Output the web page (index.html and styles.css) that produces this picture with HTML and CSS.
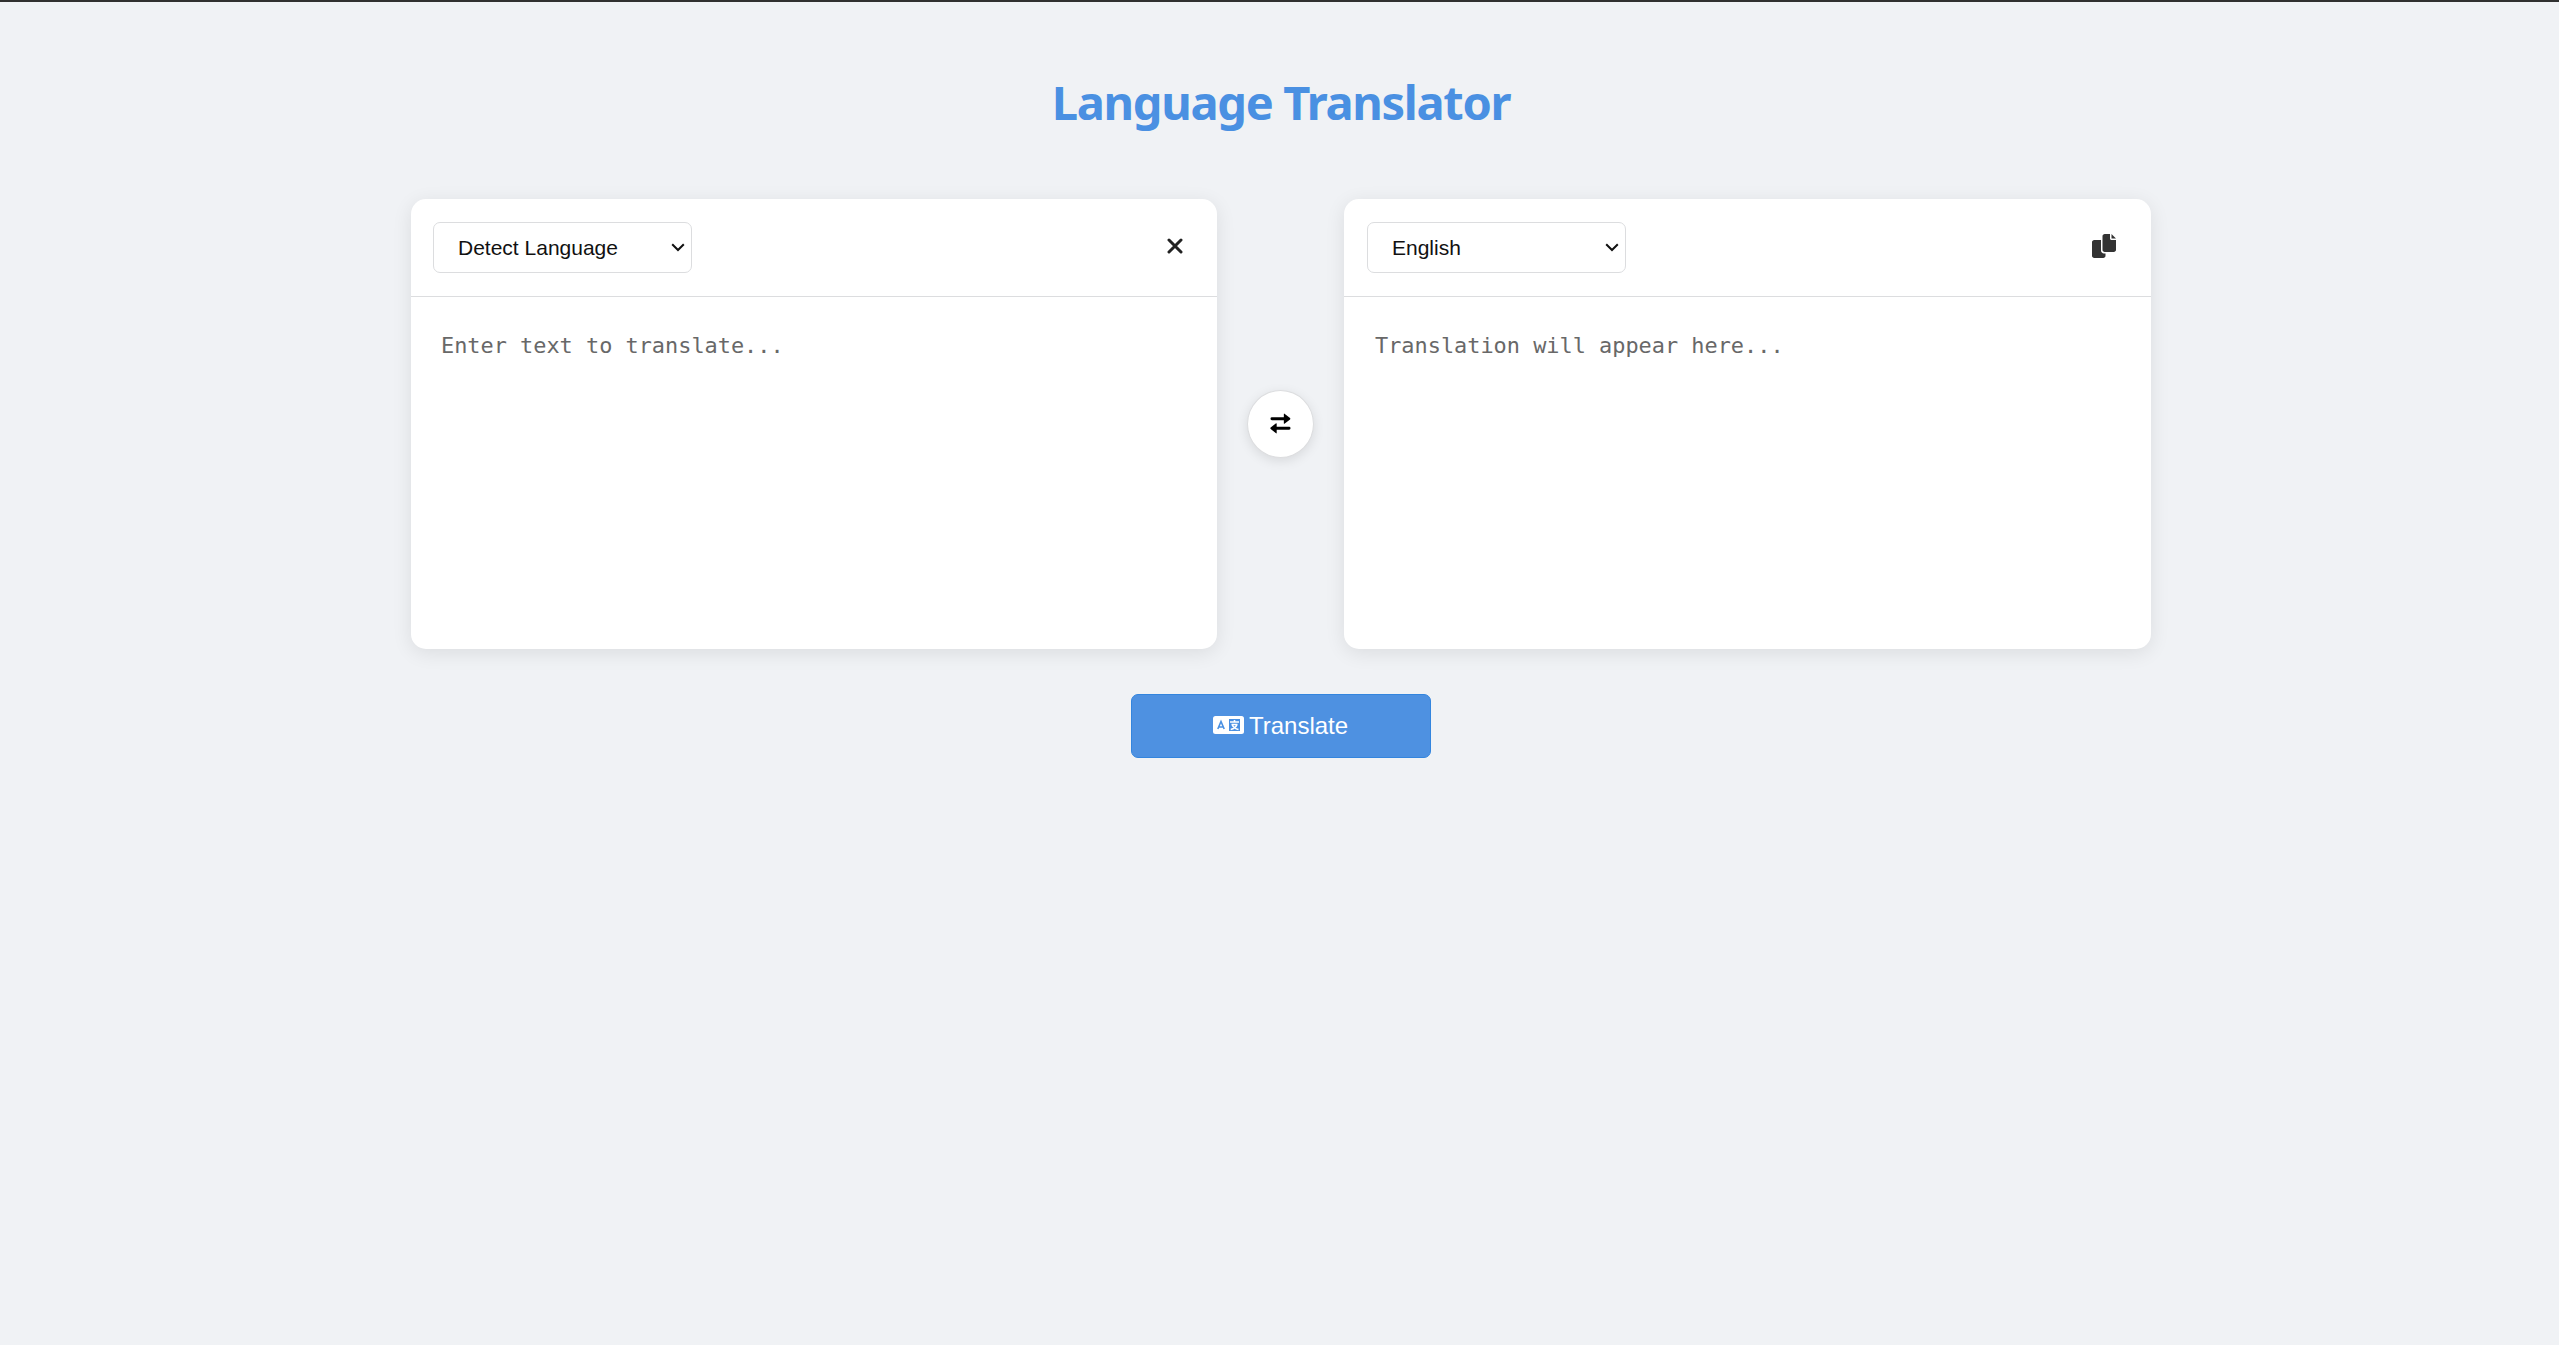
FILE: index.html
```html
<!DOCTYPE html>
<html lang="en">
<head>
<meta charset="utf-8">
<title>Language Translator</title>
<link rel="stylesheet" href="styles.css">
</head>
<body>
<main class="container">
  <h1 class="title">Language Translator</h1>
  <div class="panels">
    <section class="card source">
      <header class="card-header">
        <div class="select"><span>Detect Language</span>
          <svg class="chevron" viewBox="0 0 14 9"><path d="M1.2 1.2 7 7l5.800-5.800"/></svg>
        </div>
        <button class="icon-button close" aria-label="Clear"><svg viewBox="0 0 16 16"><path d="M2 2l12 12M14 2L2 14"/></svg></button>
      </header>
      <div class="text">Enter text to translate...</div>
    </section>
    <button class="swap" aria-label="Swap languages">
      <svg viewBox="0 0 22 22"><path class="shaft" d="M2 6h14M20 16H6"/><path d="M14.500 1.200q0-1 1-.2L21 5.300q.7.700 0 1.400L15.500 11q-1 .8-1-.2zM7 11.200q0-1-1-.2L.7 15.300q-.7.700 0 1.400L6 21q1 .8 1-.2z"/></svg>
    </button>
    <section class="card target">
      <header class="card-header">
        <div class="select"><span>English</span>
          <svg class="chevron" viewBox="0 0 14 9"><path d="M1.2 1.2 7 7l5.800-5.800"/></svg>
        </div>
        <button class="icon-button copy" aria-label="Copy"><svg viewBox="0 0 512 512"><path d="M384 96V0H272c-26.500 0-48 21.500-48 48v288c0 26.500 21.500 48 48 48h192c26.500 0 48-21.500 48-48V128h-95.100C398.400 128 384 113.600 384 96zM416 0v96h96L416 0zM192 352V128H48c-26.500 0-48 21.500-48 48v288c0 26.500 21.500 48 48 48h192c26.500 0 48-21.500 48-48v-48h-32c-35.300 0-64-28.700-64-64z"/></svg></button>
      </header>
      <div class="text">Translation will appear here...</div>
    </section>
  </div>
  <button class="translate">
    <svg viewBox="0 0 31 18">
      <rect width="31" height="18" rx="2.500" fill="#fff"/>
      <path class="cut" d="M4.800 13 8 5.500 11.200 13M5.800 11h4.400"/>
      <path class="window" d="M16 3h11v12H16z"/>
      <path class="glyph" d="M17 6h9M21.500 4v2M18.500 8.500h6M24 8.500c-.8 2.200-2.800 4.200-6.300 5M19 8.500c1 2.200 3 4.200 6.500 5"/>
    </svg>
    <span>Translate</span>
  </button>
</main>
</body>
</html>
```
FILE: styles.css
```css
* { box-sizing: border-box; }

body {
  margin: 0;
  min-height: 1345px;
  background: #f0f2f5;
  border-top: 2px solid #303030;
  font-family: "Liberation Sans", Arial, sans-serif;
}

button { border: 0; padding: 0; background: none; font: inherit; }
svg { display: block; }

.container {
  display: flex;
  flex-direction: column;
  align-items: center;
  width: 1740px;
  margin-left: 411px;
  padding-top: 68px;
}

.title {
  margin: 0 0 65px;
  height: 64px;
  line-height: 64px;
  font-family: "Noto Sans", "Open Sans", sans-serif;
  font-size: 47px;
  font-weight: 700;
  letter-spacing: -1.320px;
  color: #4a90e2;
  white-space: nowrap;
}

.panels { display: flex; align-items: center; gap: 30px; }

.card {
  width: 807px;
  height: 450px;
  border-radius: 15px;
  background: #fff;
  box-shadow: 0 4px 20px rgba(0, 0, 0, .09);
}

.card.source { width: 806px; }

.card-header {
  display: flex;
  align-items: center;
  justify-content: space-between;
  height: 98px;
  padding: 0 34px 1px 22px;
  border-bottom: 1px solid #dcdddf;
}

.target .card-header { padding-left: 23px; padding-right: 35px; }

.select {
  display: flex;
  align-items: center;
  justify-content: space-between;
  width: 259px;
  height: 51px;
  padding: 0 6px 0 24px;
  border: 1px solid #dcdddf;
  border-radius: 7px;
  font-size: 21px;
  color: #111;
}

.select span { padding-top: 2px; }
.chevron { width: 14px; height: 9px; fill: none; stroke: #111; stroke-width: 2; }

.icon-button { padding-bottom: 2px; }
.close svg { width: 16px; height: 16px; stroke: #222; stroke-width: 3; stroke-linecap: round; }
.copy svg { width: 24px; height: 24px; fill: #333; }

.text {
  padding: 35px 30px;
  font-family: "DejaVu Sans Mono", "Liberation Mono", monospace;
  font-size: 21.900px;
  line-height: 28px;
  color: #686868;
}

.target .text { padding-left: 31px; }

.swap {
  display: flex;
  align-items: center;
  justify-content: center;
  width: 67px;
  height: 68px;
  border: 1px solid #dcdddf;
  border-radius: 50%;
  background: #fff;
  box-shadow: 0 3px 12px rgba(0, 0, 0, .1);
}

.swap svg { width: 21px; height: 21px; margin: 0 1px 1px 0; }
.shaft { stroke: #000; stroke-width: 3; stroke-linecap: round; }

.translate {
  display: flex;
  align-items: center;
  justify-content: center;
  gap: 5px;
  width: 300px;
  height: 64px;
  margin-top: 45px;
  padding-right: 1px;
  border: 1px solid #3385de;
  border-radius: 7px;
  background: #4e91e1;
  color: #fff;
  font-size: 24px;
}

.translate svg { width: 31px; height: 18px; margin-bottom: 2px; }
.cut { fill: none; stroke: #4a90e2; stroke-width: 1.600; }
.window { fill: #4a90e2; }
.glyph { fill: none; stroke: #fff; stroke-width: 1.600; }
```
